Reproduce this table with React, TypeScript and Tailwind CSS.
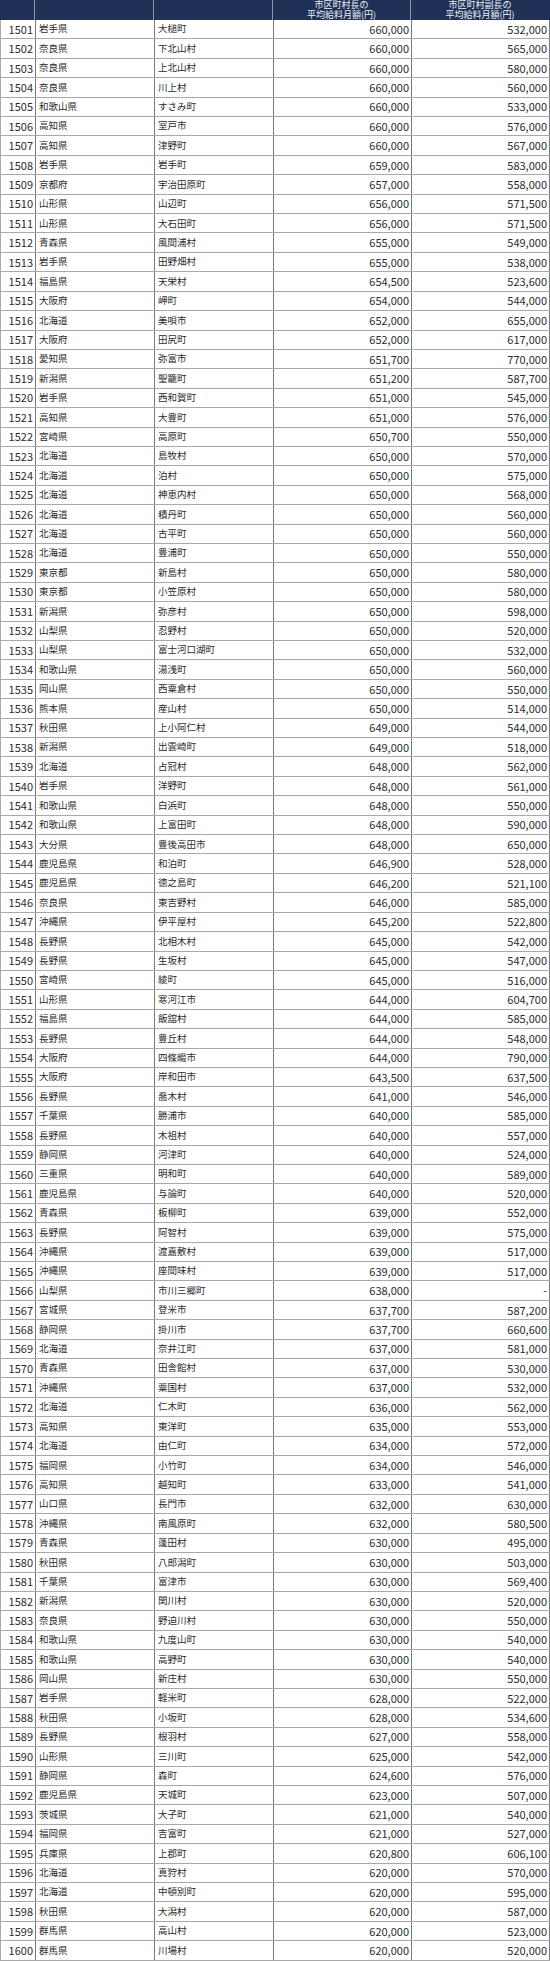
import React from 'react';

const rows: [number, string, string, string, string][] = [
  [1501, '岩手県', '大槌町', '660,000', '532,000'],
  [1502, '奈良県', '下北山村', '660,000', '565,000'],
  [1503, '奈良県', '上北山村', '660,000', '580,000'],
  [1504, '奈良県', '川上村', '660,000', '560,000'],
  [1505, '和歌山県', 'すさみ町', '660,000', '533,000'],
  [1506, '高知県', '室戸市', '660,000', '576,000'],
  [1507, '高知県', '津野町', '660,000', '567,000'],
  [1508, '岩手県', '岩手町', '659,000', '583,000'],
  [1509, '京都府', '宇治田原町', '657,000', '558,000'],
  [1510, '山形県', '山辺町', '656,000', '571,500'],
  [1511, '山形県', '大石田町', '656,000', '571,500'],
  [1512, '青森県', '風間浦村', '655,000', '549,000'],
  [1513, '岩手県', '田野畑村', '655,000', '538,000'],
  [1514, '福島県', '天栄村', '654,500', '523,600'],
  [1515, '大阪府', '岬町', '654,000', '544,000'],
  [1516, '北海道', '美唄市', '652,000', '655,000'],
  [1517, '大阪府', '田尻町', '652,000', '617,000'],
  [1518, '愛知県', '弥富市', '651,700', '770,000'],
  [1519, '新潟県', '聖籠町', '651,200', '587,700'],
  [1520, '岩手県', '西和賀町', '651,000', '545,000'],
  [1521, '高知県', '大豊町', '651,000', '576,000'],
  [1522, '宮崎県', '高原町', '650,700', '550,000'],
  [1523, '北海道', '島牧村', '650,000', '570,000'],
  [1524, '北海道', '泊村', '650,000', '575,000'],
  [1525, '北海道', '神恵内村', '650,000', '568,000'],
  [1526, '北海道', '積丹町', '650,000', '560,000'],
  [1527, '北海道', '古平町', '650,000', '560,000'],
  [1528, '北海道', '豊浦町', '650,000', '550,000'],
  [1529, '東京都', '新島村', '650,000', '580,000'],
  [1530, '東京都', '小笠原村', '650,000', '580,000'],
  [1531, '新潟県', '弥彦村', '650,000', '598,000'],
  [1532, '山梨県', '忍野村', '650,000', '520,000'],
  [1533, '山梨県', '富士河口湖町', '650,000', '532,000'],
  [1534, '和歌山県', '湯浅町', '650,000', '560,000'],
  [1535, '岡山県', '西粟倉村', '650,000', '550,000'],
  [1536, '熊本県', '産山村', '650,000', '514,000'],
  [1537, '秋田県', '上小阿仁村', '649,000', '544,000'],
  [1538, '新潟県', '出雲崎町', '649,000', '518,000'],
  [1539, '北海道', '占冠村', '648,000', '562,000'],
  [1540, '岩手県', '洋野町', '648,000', '561,000'],
  [1541, '和歌山県', '白浜町', '648,000', '550,000'],
  [1542, '和歌山県', '上富田町', '648,000', '590,000'],
  [1543, '大分県', '豊後高田市', '648,000', '650,000'],
  [1544, '鹿児島県', '和泊町', '646,900', '528,000'],
  [1545, '鹿児島県', '徳之島町', '646,200', '521,100'],
  [1546, '奈良県', '東吉野村', '646,000', '585,000'],
  [1547, '沖縄県', '伊平屋村', '645,200', '522,800'],
  [1548, '長野県', '北相木村', '645,000', '542,000'],
  [1549, '長野県', '生坂村', '645,000', '547,000'],
  [1550, '宮崎県', '綾町', '645,000', '516,000'],
  [1551, '山形県', '寒河江市', '644,000', '604,700'],
  [1552, '福島県', '飯舘村', '644,000', '585,000'],
  [1553, '長野県', '豊丘村', '644,000', '548,000'],
  [1554, '大阪府', '四條畷市', '644,000', '790,000'],
  [1555, '大阪府', '岸和田市', '643,500', '637,500'],
  [1556, '長野県', '喬木村', '641,000', '546,000'],
  [1557, '千葉県', '勝浦市', '640,000', '585,000'],
  [1558, '長野県', '木祖村', '640,000', '557,000'],
  [1559, '静岡県', '河津町', '640,000', '524,000'],
  [1560, '三重県', '明和町', '640,000', '589,000'],
  [1561, '鹿児島県', '与論町', '640,000', '520,000'],
  [1562, '青森県', '板柳町', '639,000', '552,000'],
  [1563, '長野県', '阿智村', '639,000', '575,000'],
  [1564, '沖縄県', '渡嘉敷村', '639,000', '517,000'],
  [1565, '沖縄県', '座間味村', '639,000', '517,000'],
  [1566, '山梨県', '市川三郷町', '638,000', '-'],
  [1567, '宮城県', '登米市', '637,700', '587,200'],
  [1568, '静岡県', '掛川市', '637,700', '660,600'],
  [1569, '北海道', '奈井江町', '637,000', '581,000'],
  [1570, '青森県', '田舎館村', '637,000', '530,000'],
  [1571, '沖縄県', '粟国村', '637,000', '532,000'],
  [1572, '北海道', '仁木町', '636,000', '562,000'],
  [1573, '高知県', '東洋町', '635,000', '553,000'],
  [1574, '北海道', '由仁町', '634,000', '572,000'],
  [1575, '福岡県', '小竹町', '634,000', '546,000'],
  [1576, '高知県', '越知町', '633,000', '541,000'],
  [1577, '山口県', '長門市', '632,000', '630,000'],
  [1578, '沖縄県', '南風原町', '632,000', '580,500'],
  [1579, '青森県', '蓬田村', '630,000', '495,000'],
  [1580, '秋田県', '八郎潟町', '630,000', '503,000'],
  [1581, '千葉県', '富津市', '630,000', '569,400'],
  [1582, '新潟県', '関川村', '630,000', '520,000'],
  [1583, '奈良県', '野迫川村', '630,000', '550,000'],
  [1584, '和歌山県', '九度山町', '630,000', '540,000'],
  [1585, '和歌山県', '高野町', '630,000', '540,000'],
  [1586, '岡山県', '新庄村', '630,000', '550,000'],
  [1587, '岩手県', '軽米町', '628,000', '522,000'],
  [1588, '秋田県', '小坂町', '628,000', '534,600'],
  [1589, '長野県', '根羽村', '627,000', '558,000'],
  [1590, '山形県', '三川町', '625,000', '542,000'],
  [1591, '静岡県', '森町', '624,600', '576,000'],
  [1592, '鹿児島県', '天城町', '623,000', '507,000'],
  [1593, '茨城県', '大子町', '621,000', '540,000'],
  [1594, '福岡県', '吉富町', '621,000', '527,000'],
  [1595, '兵庫県', '上郡町', '620,800', '606,100'],
  [1596, '北海道', '真狩村', '620,000', '570,000'],
  [1597, '北海道', '中頓別町', '620,000', '595,000'],
  [1598, '秋田県', '大潟村', '620,000', '587,000'],
  [1599, '群馬県', '高山村', '620,000', '523,000'],
  [1600, '群馬県', '川場村', '620,000', '520,000'],
];

const cols = 'grid grid-cols-[35px_119px_119px_138px_138px]';

const App: React.FC = () => {
  return (
    <div className="w-[550px] bg-white font-['Noto_Sans_CJK_JP','Noto_Sans',sans-serif] text-[#2b2b2b]">
      <div className={`${cols} h-[20px] bg-[#1f3157] text-[#eef0f5]`}>
        <div className="border-r border-[#8d96a8]"></div>
        <div className="border-r border-[#8d96a8]"></div>
        <div className="border-r border-[#8d96a8]"></div>
        <div className="border-r border-[#8d96a8] flex flex-col items-center justify-center text-[9px] leading-[10px]">
          <span>市区町村長の</span>
          <span>平均給料月額(円)</span>
        </div>
        <div className="flex flex-col items-center justify-center text-[9px] leading-[10px]">
          <span>市区町村副長の</span>
          <span>平均給料月額(円)</span>
        </div>
      </div>

      {rows.map(([no, pref, city, mayor, vice]) => (
        <div key={no} className={`${cols} h-[19.41px] border-b border-l border-[#a9a9a9]`}>
          <div className="flex items-center justify-end pr-[2px] text-[11px] leading-none border-r border-[#7a7a7a]">
            {no}
          </div>
          <div className="flex items-center pl-[3px] text-[9.5px] leading-none border-r border-[#7a7a7a]">
            {pref}
          </div>
          <div className="flex items-center pl-[3px] text-[9.5px] leading-none border-r border-[#7a7a7a]">
            {city}
          </div>
          <div className="flex items-center justify-end pr-[2px] text-[11px] leading-none border-r border-[#7a7a7a]">
            {mayor}
          </div>
          <div className="flex items-center justify-end pr-[2px] text-[11px] leading-none border-r border-[#7a7a7a]">
            {vice}
          </div>
        </div>
      ))}
    </div>
  );
};

export default App;
